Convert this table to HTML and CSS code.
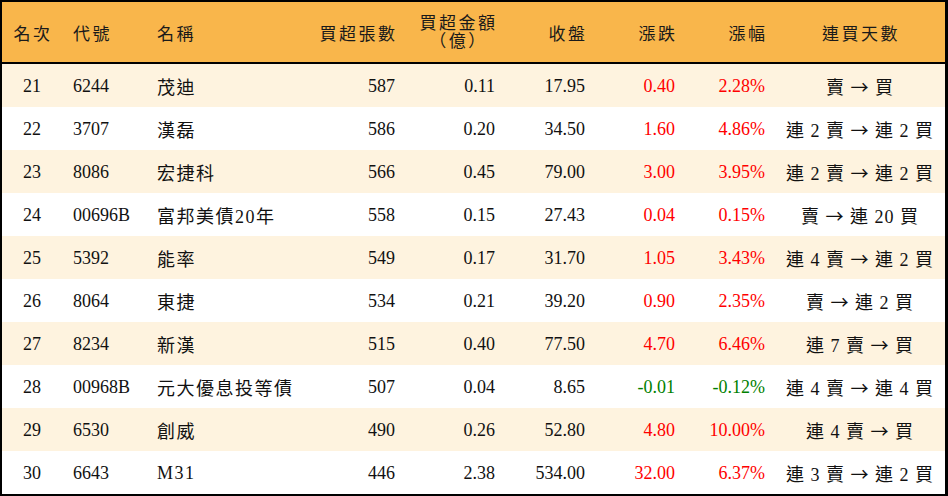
FILE: index.html
```html
<!DOCTYPE html>
<html lang="zh-Hant">
<head>
<meta charset="utf-8">
<title>買超排行</title>
<link rel="stylesheet" href="styles.css">
</head>
<body>
<div class="board">
  <div class="row head">
    <div class="c c1">名次</div>
    <div class="c c2">代號</div>
    <div class="c c3">名稱</div>
    <div class="c c4">買超張數</div>
    <div class="c c5"><span class="two"><span>買超金額</span><span>（億）</span></span></div>
    <div class="c c6">收盤</div>
    <div class="c c7">漲跌</div>
    <div class="c c8">漲幅</div>
    <div class="c c9">連買天數</div>
  </div>

  <div class="row odd">
    <div class="c c1">21</div><div class="c c2">6244</div><div class="c c3 nm">茂迪</div>
    <div class="c c4">587</div><div class="c c5">0.11</div><div class="c c6">17.95</div>
    <div class="c c7 up">0.40</div><div class="c c8 up">2.28%</div>
    <div class="c c9 dd"><span>賣 <span class="arr">→</span> 買</span></div>
  </div>
  <div class="row">
    <div class="c c1">22</div><div class="c c2">3707</div><div class="c c3 nm">漢磊</div>
    <div class="c c4">586</div><div class="c c5">0.20</div><div class="c c6">34.50</div>
    <div class="c c7 up">1.60</div><div class="c c8 up">4.86%</div>
    <div class="c c9 dd"><span>連 2 賣 <span class="arr">→</span> 連 2 買</span></div>
  </div>
  <div class="row odd">
    <div class="c c1">23</div><div class="c c2">8086</div><div class="c c3 nm">宏捷科</div>
    <div class="c c4">566</div><div class="c c5">0.45</div><div class="c c6">79.00</div>
    <div class="c c7 up">3.00</div><div class="c c8 up">3.95%</div>
    <div class="c c9 dd"><span>連 2 賣 <span class="arr">→</span> 連 2 買</span></div>
  </div>
  <div class="row">
    <div class="c c1">24</div><div class="c c2">00696B</div><div class="c c3 nm">富邦美債20年</div>
    <div class="c c4">558</div><div class="c c5">0.15</div><div class="c c6">27.43</div>
    <div class="c c7 up">0.04</div><div class="c c8 up">0.15%</div>
    <div class="c c9 dd"><span>賣 <span class="arr">→</span> 連 20 買</span></div>
  </div>
  <div class="row odd">
    <div class="c c1">25</div><div class="c c2">5392</div><div class="c c3 nm">能率</div>
    <div class="c c4">549</div><div class="c c5">0.17</div><div class="c c6">31.70</div>
    <div class="c c7 up">1.05</div><div class="c c8 up">3.43%</div>
    <div class="c c9 dd"><span>連 4 賣 <span class="arr">→</span> 連 2 買</span></div>
  </div>
  <div class="row">
    <div class="c c1">26</div><div class="c c2">8064</div><div class="c c3 nm">東捷</div>
    <div class="c c4">534</div><div class="c c5">0.21</div><div class="c c6">39.20</div>
    <div class="c c7 up">0.90</div><div class="c c8 up">2.35%</div>
    <div class="c c9 dd"><span>賣 <span class="arr">→</span> 連 2 買</span></div>
  </div>
  <div class="row odd">
    <div class="c c1">27</div><div class="c c2">8234</div><div class="c c3 nm">新漢</div>
    <div class="c c4">515</div><div class="c c5">0.40</div><div class="c c6">77.50</div>
    <div class="c c7 up">4.70</div><div class="c c8 up">6.46%</div>
    <div class="c c9 dd"><span>連 7 賣 <span class="arr">→</span> 買</span></div>
  </div>
  <div class="row">
    <div class="c c1">28</div><div class="c c2">00968B</div><div class="c c3 nm">元大優息投等債</div>
    <div class="c c4">507</div><div class="c c5">0.04</div><div class="c c6">8.65</div>
    <div class="c c7 dn">-0.01</div><div class="c c8 dn">-0.12%</div>
    <div class="c c9 dd"><span>連 4 賣 <span class="arr">→</span> 連 4 買</span></div>
  </div>
  <div class="row odd">
    <div class="c c1">29</div><div class="c c2">6530</div><div class="c c3 nm">創威</div>
    <div class="c c4">490</div><div class="c c5">0.26</div><div class="c c6">52.80</div>
    <div class="c c7 up">4.80</div><div class="c c8 up">10.00%</div>
    <div class="c c9 dd"><span>連 4 賣 <span class="arr">→</span> 買</span></div>
  </div>
  <div class="row">
    <div class="c c1">30</div><div class="c c2">6643</div><div class="c c3 nm">M31</div>
    <div class="c c4">446</div><div class="c c5">2.38</div><div class="c c6">534.00</div>
    <div class="c c7 up">32.00</div><div class="c c8 up">6.37%</div>
    <div class="c c9 dd"><span>連 3 賣 <span class="arr">→</span> 連 2 買</span></div>
  </div>
</div>
</body>
</html>
```

FILE: styles.css
```css
html, body {
  margin: 0;
  padding: 0;
  background: #ffffff;
}

.board {
  width: 948px;
  height: 496px;
  box-sizing: border-box;
  border-top: 2px solid #000;
  border-left: 2px solid #000;
  border-right: 3px solid #000;
  border-bottom: 2px solid #000;
  display: flex;
  flex-direction: column;
  font-family: "Liberation Serif", "Noto Sans CJK TC", serif;
  font-size: 18px;
  color: #111;
}

.row {
  display: grid;
  grid-template-columns: 60px 85px 153px 105px 100px 90px 90px 90px 170px;
  height: 43px;
  background: #ffffff;
}

.row.odd {
  background: #fef3df;
}

.row.head {
  height: 60px;
  background: #f9b64b;
  border-bottom: 2px solid #000;
  font-size: 17px;
  letter-spacing: 2.5px;
  color: #1a1a1a;
}

.c {
  display: flex;
  align-items: center;
  white-space: nowrap;
  padding-top: 1px;
}

.c1 { justify-content: center; }
.c2 { padding-left: 11px; }
.c3 { padding-left: 10px; }
.c4, .c5, .c6, .c7, .c8 {
  justify-content: flex-end;
  padding-right: 10px;
}
.c9 { justify-content: center; }

.head .c4, .head .c5, .head .c6, .head .c7, .head .c8 {
  padding-right: 7.5px;
}
.head .c1 { padding-left: 2px; }
.head .c9 { padding-left: 2px; }

.two {
  display: flex;
  flex-direction: column;
  align-items: center;
  line-height: 18px;
}

.nm {
  font-size: 18px;
  letter-spacing: 1.5px;
}

.dd {
  font-size: 18px;
  letter-spacing: 1px;
}

.dd > span {
  white-space: pre;
}

.arr {
  font-family: "Noto Sans CJK TC", sans-serif;
}

.up { color: #ff0000; }
.dn { color: #008000; }
```
